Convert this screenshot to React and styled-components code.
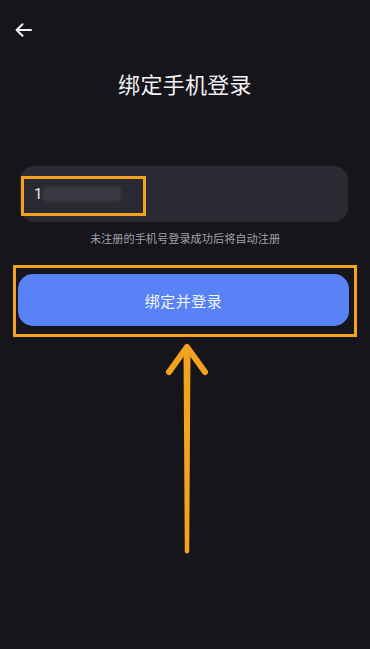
import React from "react";
import styled, { createGlobalStyle } from "styled-components";

const Global = createGlobalStyle`
  html, body { margin: 0; padding: 0; background: #16151b; }
  body { font-family: "Noto Sans CJK SC", "Noto Sans", sans-serif; }
`;

const Page = styled.div`
  width: 370px;
  height: 649px;
  background: #16151b;
  display: flex;
  flex-direction: column;
  overflow: hidden;
`;

const TopBar = styled.div`
  height: 20px;
  padding: 20px 0 0 14px;
  display: flex;
  align-items: center;
`;

const BackButton = styled.button`
  border: none;
  background: none;
  padding: 0;
  width: 18px;
  height: 18px;
  display: flex;
  align-items: center;
  justify-content: center;
  cursor: pointer;
`;

const Title = styled.h1`
  margin: 28px 0 0 0;
  text-align: center;
  font-size: 22px;
  line-height: 30px;
  font-weight: 400;
  color: #f1f1f3;
  letter-spacing: 0.3px;
`;

const InputBox = styled.div`
  position: relative;
  margin: 68px 22px 0 20px;
  height: 56px;
  border-radius: 14px;
  background: #2b2a32;
  display: flex;
  align-items: center;
  padding-left: 14px;
`;

const PhoneText = styled.span`
  font-family: Roboto, "Noto Sans", sans-serif;
  font-size: 15px;
  color: #e6e6ea;
`;

const BlurredDigits = styled.span`
  display: inline-block;
  width: 78px;
  height: 14px;
  margin-left: 1px;
  border-radius: 4px;
  background: #3b3a42;
  filter: blur(1.5px);
`;

const Highlight = styled.div`
  position: absolute;
  left: 1px;
  top: 10px;
  width: 119px;
  height: 34px;
  border: 3px solid #f5a21f;
  pointer-events: none;
`;

const Hint = styled.p`
  margin: 8px 0 0 0;
  text-align: center;
  font-size: 11.2px;
  line-height: 16px;
  color: #a2a1a8;
`;

const ButtonFrame = styled.div`
  margin: 19px 0 0 13px;
  width: 331px;
  border: 3px solid #f5a21f;
  padding: 6px 5px 8px 2px;
`;

const PrimaryButton = styled.button`
  width: 100%;
  height: 52px;
  border: none;
  border-radius: 15px;
  background: #5a82f7;
  color: #f4f6ff;
  font-family: "Noto Sans CJK SC", sans-serif;
  font-size: 15px;
  font-weight: 400;
  letter-spacing: 0.5px;
  cursor: pointer;
`;

const ArrowWrap = styled.div`
  margin: 6px 0 0 162px;
  width: 50px;
  height: 214px;
`;

function BackIcon() {
  return (
    <svg width="17" height="14" viewBox="0 0 17 14" fill="none">
      <path
        d="M16 7H1.8M7.5 1.2L1.6 7l5.9 5.8"
        stroke="#f2f2f4"
        strokeWidth="2"
        strokeLinecap="round"
        strokeLinejoin="round"
      />
    </svg>
  );
}

function UpArrow() {
  return (
    <svg width="50" height="214" viewBox="0 0 50 214" fill="none">
      <path d="M21.5 6 L28.5 6 L27.2 209 Q25 212 22.8 209 Z" fill="#f5a21f" />
      <path
        d="M7 29 L25 4 L43 29"
        stroke="#f5a21f"
        strokeWidth="6"
        strokeLinecap="round"
        strokeLinejoin="round"
      />
    </svg>
  );
}

export default function App() {
  return (
    <>
      <Global />
      <Page>
        <TopBar>
          <BackButton aria-label="返回">
            <BackIcon />
          </BackButton>
        </TopBar>
        <Title>绑定手机登录</Title>
        <InputBox>
          <PhoneText>1</PhoneText>
          <BlurredDigits />
          <Highlight />
        </InputBox>
        <Hint>未注册的手机号登录成功后将自动注册</Hint>
        <ButtonFrame>
          <PrimaryButton>绑定并登录</PrimaryButton>
        </ButtonFrame>
        <ArrowWrap>
          <UpArrow />
        </ArrowWrap>
      </Page>
    </>
  );
}
